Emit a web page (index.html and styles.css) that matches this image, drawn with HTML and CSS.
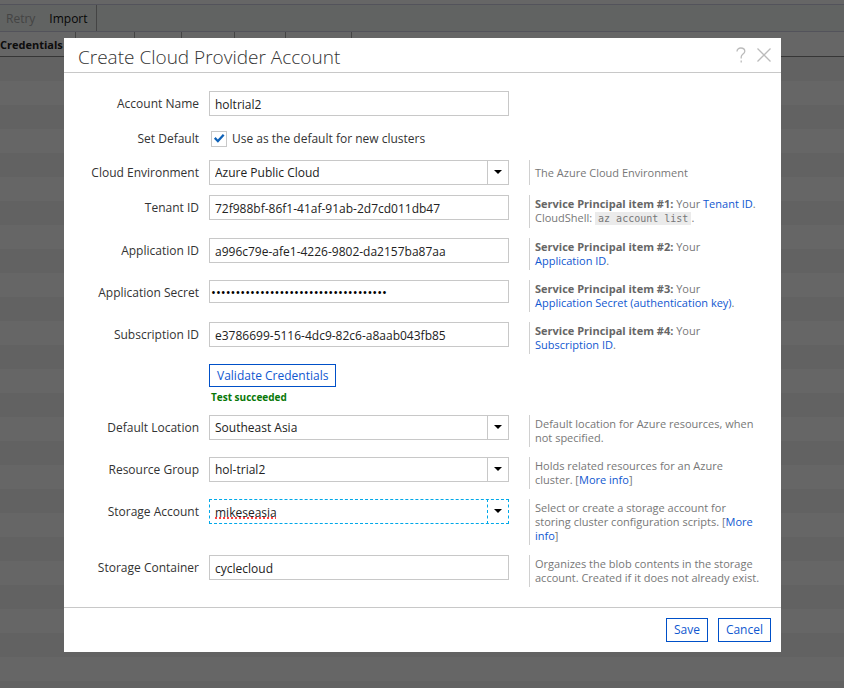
FILE: index.html
```html
<!DOCTYPE html>
<html lang="en">
<head>
<meta charset="utf-8">
<title>Create Cloud Provider Account</title>
<link rel="stylesheet" href="styles.css">
</head>
<body>
<div class="page">
  <div class="toolbar">
    <button class="tool" type="button" disabled>Retry</button>
    <button class="tool" type="button">Import</button>
  </div>
  <div class="grid-head">
    <span class="col col-first">Credentials</span>
    <span class="col col-a"></span>
    <span class="col col-b"></span>
    <span class="col col-c"></span>
    <span class="col col-b"></span>
    <span class="col col-d"></span>
  </div>
  <div class="grid-rows"></div>
</div>
<div class="backdrop">
  <form class="dialog" role="dialog" aria-labelledby="dialog-title">
    <header class="dialog-head">
      <h1 id="dialog-title">Create Cloud Provider Account</h1>
      <button class="icon-button" type="button" aria-label="Help">
        <svg width="10" height="16" viewBox="0 0 10 16"><path d="M1 4.5C1 2.2 2.6 1 4.8 1S8.800 2.200 8.800 4.200C8.800 7 5.200 7.200 5.200 10V11.500M5.200 13.500V15.500"/></svg>
      </button>
      <button class="icon-button" type="button" aria-label="Close">
        <svg width="16" height="16" viewBox="0 0 16 16"><path d="M1.500 1.500L14.500 14.500M14.500 1.500L1.500 14.500"/></svg>
      </button>
    </header>
    <div class="fields">
      <div class="row">
        <label class="name" for="account">Account Name</label>
        <input class="box" id="account" type="text" value="holtrial2">
      </div>
      <div class="row">
        <span class="name">Set Default</span>
        <label class="check"><input type="checkbox" checked>Use as the default for new clusters</label>
      </div>
      <div class="row">
        <label class="name" for="environment">Cloud Environment</label>
        <div class="combo">
          <select class="box" id="environment"><option>Azure Public Cloud</option></select>
          <span class="arrow"></span>
        </div>
        <p class="help help-single">The Azure Cloud Environment</p>
      </div>
      <div class="row">
        <label class="name" for="tenant">Tenant ID</label>
        <input class="box" id="tenant" type="text" value="72f988bf-86f1-41af-91ab-2d7cd011db47">
        <p class="help"><b>Service Principal item #1:</b> Your <a href="#">Tenant ID</a>.<br>CloudShell: <code>az account list</code>.</p>
      </div>
      <div class="row">
        <label class="name" for="application">Application ID</label>
        <input class="box" id="application" type="text" value="a996c79e-afe1-4226-9802-da2157ba87aa">
        <p class="help"><b>Service Principal item #2:</b> Your<br><a href="#">Application ID</a>.</p>
      </div>
      <div class="row">
        <label class="name" for="secret">Application Secret</label>
        <input class="box secret" id="secret" type="password" value="abcdefghijklmnopqrstuvwxyz0123456789">
        <p class="help"><b>Service Principal item #3:</b> Your<br><a href="#">Application Secret (authentication key)</a>.</p>
      </div>
      <div class="row">
        <label class="name" for="subscription">Subscription ID</label>
        <input class="box" id="subscription" type="text" value="e3786699-5116-4dc9-82c6-a8aab043fb85">
        <p class="help"><b>Service Principal item #4:</b> Your<br><a href="#">Subscription ID</a>.</p>
      </div>
      <div class="row">
        <div class="validate">
          <button class="button" type="button">Validate Credentials</button>
          <p class="result">Test succeeded</p>
        </div>
      </div>
      <div class="row">
        <label class="name" for="location">Default Location</label>
        <div class="combo">
          <select class="box" id="location"><option>Southeast Asia</option></select>
          <span class="arrow"></span>
        </div>
        <p class="help">Default location for Azure resources, when not specified.</p>
      </div>
      <div class="row">
        <label class="name" for="group">Resource Group</label>
        <div class="combo">
          <select class="box" id="group"><option>hol-trial2</option></select>
          <span class="arrow"></span>
        </div>
        <p class="help">Holds related resources for an Azure<br>cluster. [<a href="#">More info</a>]</p>
      </div>
      <div class="row">
        <label class="name" for="storage">Storage Account</label>
        <div class="combo active">
          <input class="box misspelled" id="storage" type="text" value="mikeseasia">
          <button class="arrow" type="button" aria-label="Show storage accounts"></button>
        </div>
        <p class="help">Select or create a storage account for<br>storing cluster configuration scripts. [<a href="#">More info</a>]</p>
      </div>
      <div class="row">
        <label class="name" for="container">Storage Container</label>
        <input class="box" id="container" type="text" value="cyclecloud">
        <p class="help">Organizes the blob contents in the storage account. Created if it does not already exist.</p>
      </div>
    </div>
    <footer class="dialog-foot">
      <button class="button" type="submit">Save</button>
      <button class="button" type="button">Cancel</button>
    </footer>
  </form>
</div>
</body>
</html>
```
FILE: styles.css
```css
* {
  box-sizing: border-box;
}

body {
  margin: 0;
  min-height: 100vh;
  overflow: hidden;
  font: 12px/16px "Open Sans", sans-serif;
  color: #333;
}

button,
input,
select {
  margin: 0;
  font: inherit;
  color: inherit;
}

h1,
p {
  margin: 0;
}

/* Page behind the dialog */
.page {
  display: flex;
  flex-direction: column;
  height: 100vh;
  padding-top: 4px;
}

.toolbar {
  display: flex;
  height: 28px;
  border: solid #d0d0e4;
  border-width: 1px 0;
  background: #f2f7f4;
}

.tool {
  padding: 2px 8px 0 6px;
  border: 0;
  background: none;
  color: #111;
}

.tool:disabled {
  color: #aaa;
}

.tool + .tool {
  border-right: 1px solid #aaa;
}

.grid-head {
  display: flex;
  height: 25px;
  border-bottom: 1px solid #888;
  font-size: 11px;
  font-weight: bold;
  line-height: 26px;
  color: #222;
}

.col {
  border-right: 1px solid #aaa;
}

.col-first {
  width: 76px;
}

.col-a {
  width: 59px;
}

.col-b {
  width: 47px;
}

.col-c {
  width: 53px;
}

.col-b ~ .col-b {
  width: 51px;
}

.col-d {
  width: 66px;
}

.grid-rows {
  flex: 1;
  background: repeating-linear-gradient(#f4f4f4 0 24px, #fff 24px 48px);
}

/* Dialog */
.backdrop {
  position: fixed;
  inset: 0;
  padding: 38px 63px 36px 64px;
  background: rgba(0, 0, 0, 0.6);
}

.dialog {
  background: #fff;
}

.dialog-head {
  display: flex;
  align-items: center;
  gap: 10px;
  height: 35px;
  padding: 0 9px 0 14px;
  border-bottom: 1px solid #c8c8c8;
}

.dialog-head h1 {
  flex: 1;
  padding-top: 4px;
  font: 300 19px/28px "Open Sans", sans-serif;
}

.icon-button {
  display: flex;
  padding: 0;
  border: 0;
  background: none;
}

.icon-button path {
  fill: none;
  stroke: #bbb;
  stroke-width: 1.3;
}

.fields {
  display: flex;
  flex-direction: column;
  gap: 10px;
  padding: 18px 4px 20px 0;
}

.row {
  display: grid;
  grid-template-columns: 135px minmax(0, 300px) minmax(0, 248px);
  column-gap: 10px;
  align-items: start;
}

.name {
  padding-top: 5px;
  text-align: right;
}

.box {
  display: block;
  width: 100%;
  height: 25px;
  padding: 1px 5px 0;
  border: 1px solid #c8c8c8;
  border-radius: 0;
  outline: 0;
  background: #fff;
  color: #222;
  appearance: none;
}

.secret {
  height: 23px;
  padding: 0 1px;
  font-size: 13px;
  color: #000;
}

.combo {
  display: flex;
  position: relative;
}

.arrow {
  position: absolute;
  inset: 0 0 0 auto;
  width: 22px;
  padding: 0;
  border: 0;
  border-left: 1px solid #c8c8c8;
  background: none;
  pointer-events: none;
}

.arrow::after {
  content: "";
  position: absolute;
  top: 10px;
  left: 6px;
  border: solid transparent;
  border-width: 4px 4px 0;
  border-top-color: #000;
}

.active .box {
  border: 1px dashed #00a8e8;
}

.active .arrow {
  border-left: 1px dashed #00a8e8;
  pointer-events: auto;
}

.misspelled {
  text-decoration: underline dotted #f44 2px;
  text-decoration-skip-ink: none;
  text-underline-offset: 1px;
}

.check {
  display: flex;
  align-items: center;
  gap: 5px;
  height: 24px;
  padding: 1px 0 0 2px;
}

.check input {
  display: grid;
  place-items: center;
  width: 16px;
  height: 16px;
  border: 1px solid #c8c8c8;
  appearance: none;
}

.check input:checked::before {
  content: "";
  width: 12px;
  height: 12px;
  background: #0f62b8;
  clip-path: polygon(8% 52%, 22% 38%, 40% 58%, 82% 12%, 96% 25%, 41% 86%);
}

.help {
  margin-left: 10px;
  min-height: 25px;
  padding: 2px 0 2px 5px;
  border-left: 1px solid #d0d0d0;
  font-size: 11px;
  line-height: 14px;
  color: #777;
}

.help-single {
  padding-top: 6px;
}

.help b {
  color: #666;
}

.help code {
  padding: 1px 3px;
  background: #ebebeb;
  font: 10px/14px "DejaVu Sans Mono", monospace;
}

a {
  color: #1058d0;
  text-decoration: none;
}

.validate {
  grid-column: 2;
}

.button {
  height: 24px;
  padding: 0 7px;
  border: 1px solid #0050c8;
  background: #fff;
  color: #1058d0;
}

.validate .button {
  display: block;
  height: 23px;
}

.result {
  padding: 2px 2px 0;
  font-size: 10px;
  font-weight: bold;
  color: #087808;
}

.dialog-foot {
  display: flex;
  justify-content: flex-end;
  gap: 10px;
  padding: 10px;
  border-top: 1px solid #c8c8c8;
}
```
